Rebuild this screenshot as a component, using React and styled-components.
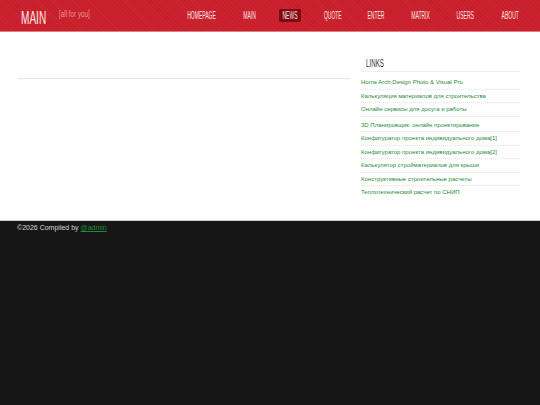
import styled, { createGlobalStyle } from "styled-components";

// slot widths keep the condensed labels at their places in the bar
const navItems = [
  { label: "HOMEPAGE", width: 35 },
  { label: "MAIN", width: 22 },
  { label: "NEWS", width: 22, active: true },
  { label: "QUOTE", width: 25 },
  { label: "ENTER", width: 24 },
  { label: "MATRIX", width: 27 },
  { label: "USERS", width: 25 },
  { label: "ABOUT", width: 26 },
];

const links = [
  { text: "Home Arch Design Photo & Visual Pro" },
  { text: "Калькуляция материалов для строительства" },
  { text: "Онлайн сервисы для досуга и работы", gap: true },
  { text: "3D Планировщик: онлайн проектирование" },
  { text: "Конфигуратор проекта индивидуального дома[1]" },
  { text: "Конфигуратор проекта индивидуального дома[2]" },
  { text: "Калькулятор стройматериалов для крыши" },
  { text: "Конструктивные строительные расчеты" },
  { text: "Теплотехнический расчет по СНИП", last: true },
];

export default function App() {
  return (
    <>
      <GlobalStyle />
      <StyledPage>
        <StyledHeader>
          <StyledLogo>
            <StyledNarrow $scale={0.56}>MAIN</StyledNarrow>
          </StyledLogo>
          <StyledSlogan>
            <StyledNarrow $scale={0.74}>[all for you]</StyledNarrow>
          </StyledSlogan>
          <StyledNav>
            {navItems.map((item) => (
              <StyledNavItem key={item.label} $w={item.width} $active={item.active}>
                <StyledNarrow $scale={0.5} $center>
                  {item.label}
                </StyledNarrow>
              </StyledNavItem>
            ))}
          </StyledNav>
        </StyledHeader>

        <StyledMain>
          <StyledContent>
            <StyledArticle />
          </StyledContent>
          <StyledSidebar>
            <StyledSideTitle>
              <StyledNarrow $scale={0.62}>LINKS</StyledNarrow>
            </StyledSideTitle>
            <StyledLinkList>
              {links.map((link) => (
                <StyledLinkItem key={link.text} $gap={link.gap} $last={link.last}>
                  <a href="#">{link.text}</a>
                </StyledLinkItem>
              ))}
            </StyledLinkList>
          </StyledSidebar>
        </StyledMain>

        <StyledFooter>
          ©2026 Compiled by <a href="#">@admin</a>
        </StyledFooter>
      </StyledPage>
    </>
  );
}

// Styled components

const GlobalStyle = createGlobalStyle`
  html, body {
    margin: 0;
    padding: 0;
    height: 100%;
    background: #161616;
  }
  #root {
    height: 100%;
  }
`;

const StyledPage = styled.div`
  min-height: 100%;
  display: flex;
  flex-direction: column;
  background: #161616;
  font-family: "Liberation Sans", Arial, sans-serif;
`;

const StyledNarrow = styled.span`
  display: inline-block;
  white-space: nowrap;
  transform: scaleX(${(p) => p.$scale});
  transform-origin: ${(p) => (p.$center ? "center" : "left")} center;
`;

const StyledHeader = styled.header`
  height: 31px;
  display: flex;
  align-items: center;
  padding: 0 17px 0 21px;
  background-color: #c91f2b;
  background-image: repeating-linear-gradient(
    45deg,
    rgba(255, 255, 255, 0.035) 0px,
    rgba(255, 255, 255, 0.035) 1px,
    transparent 1px,
    transparent 3px
  );
  border-bottom: 1px solid #e27b82;
`;

const StyledLogo = styled.div`
  width: 38px;
  color: #fde9ea;
  font-size: 18px;
  line-height: 18px;
  padding-top: 4px;
`;

const StyledSlogan = styled.div`
  color: #ec959b;
  font-size: 8.5px;
  margin-top: -3px;
`;

const StyledNav = styled.nav`
  margin-left: auto;
  display: flex;
  align-items: center;
  gap: 19px;
`;

const StyledNavItem = styled.span`
  width: ${(p) => p.$w}px;
  height: 13px;
  display: flex;
  align-items: center;
  justify-content: center;
  color: #fbe4e5;
  font-size: 10px;
  border-radius: 2px;
  background: ${(p) => (p.$active ? "#7c0a10" : "transparent")};
`;

const StyledMain = styled.main`
  background: #fff;
  display: flex;
  padding: 0 20px 0 17px;
  height: 188px;
`;

const StyledContent = styled.div`
  width: 334px;
`;

const StyledArticle = styled.div`
  height: 46px;
  border-bottom: 1px solid #e8e8e8;
`;

const StyledSidebar = styled.aside`
  margin-left: 10px;
  flex: 1;
`;

const StyledSideTitle = styled.h3`
  margin: 0;
  padding: 26px 0 2px 5px;
  font-weight: normal;
  font-size: 10px;
  color: #333;
  border-bottom: 1px solid #eeeeee;
`;

const StyledLinkList = styled.ul`
  list-style: none;
  margin: 4px 0 0;
  padding: 0;
`;

const StyledLinkItem = styled.li`
  font-size: 6px;
  line-height: 12.5px;
  border-bottom: ${(p) => (p.$last ? "none" : "1px dotted #e4e4e4")};
  margin-bottom: ${(p) => (p.$gap ? "2px" : "0")};

  a {
    color: #1f8a3b;
    text-decoration: none;
  }
`;

const StyledFooter = styled.footer`
  flex: 1;
  background: #161616;
  border-top: 1px solid #cfcfcf;
  padding: 3px 17px;
  color: #d6d6d6;
  font-size: 7px;

  a {
    color: #1f8a3b;
    text-decoration: underline;
  }
`;
